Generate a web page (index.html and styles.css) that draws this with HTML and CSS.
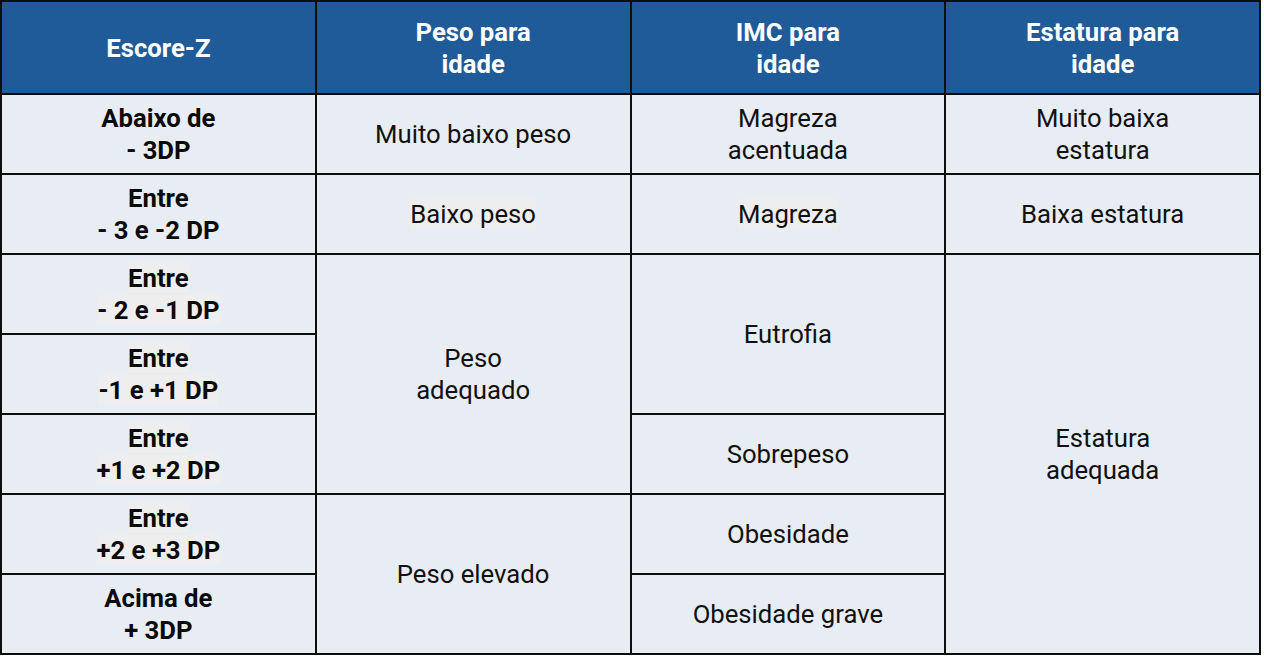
FILE: index.html
```html
<!DOCTYPE html>
<html lang="pt">
<head>
<meta charset="utf-8">
<title>Escore-Z</title>
<link rel="stylesheet" href="styles.css">
</head>
<body>
<table class="zt">
  <thead>
    <tr>
      <th>Escore-Z</th>
      <th>Peso para<br>idade</th>
      <th>IMC para<br>idade</th>
      <th>Estatura para<br>idade</th>
    </tr>
  </thead>
  <tbody>
    <tr>
      <td class="z">Abaixo de<br>- 3DP</td>
      <td>Muito baixo peso</td>
      <td>Magreza<br>acentuada</td>
      <td>Muito baixa<br>estatura</td>
    </tr>
    <tr>
      <td class="z">Entre<br>- 3 e -2 DP</td>
      <td><span class="hl">Baixo peso</span></td>
      <td><span class="hl">Magreza</span></td>
      <td>Baixa estatura</td>
    </tr>
    <tr>
      <td class="z"><span class="hl">Entre</span><br><span class="hl">- 2 e -1 DP</span></td>
      <td rowspan="3">Peso<br>adequado</td>
      <td rowspan="2">Eutrofia</td>
      <td rowspan="5">Estatura<br>adequada</td>
    </tr>
    <tr>
      <td class="z"><span class="hl">Entre</span><br><span class="hl">-1 e +1 DP</span></td>
    </tr>
    <tr>
      <td class="z"><span class="hl">Entre</span><br><span class="hl">+1 e +2 DP</span></td>
      <td>Sobrepeso</td>
    </tr>
    <tr>
      <td class="z"><span class="hl">Entre</span><br><span class="hl">+2 e +3 DP</span></td>
      <td rowspan="2">Peso elevado</td>
      <td>Obesidade</td>
    </tr>
    <tr>
      <td class="z">Acima de<br>+ 3DP</td>
      <td>Obesidade grave</td>
    </tr>
  </tbody>
</table>
</body>
</html>
```
FILE: styles.css
```css
html, body {
  margin: 0;
  padding: 0;
  background: #ffffff;
}
.zt {
  border-collapse: collapse;
  table-layout: fixed;
  width: 1261px;
  margin: 0;
  font-family: Roboto, "Liberation Sans", sans-serif;
  font-size: 25.7px;
  line-height: 32px;
  color: #111111;
}
.zt th,
.zt td {
  border: 2.5px solid #0d0d0d;
  text-align: center;
  vertical-align: middle;
  padding: 0;
}
.zt th {
  background: #1f5b99;
  color: #ffffff;
  font-weight: 700;
  height: 91px;
}
.zt td {
  background: #e8ecf3;
  height: 78px;
}
.zt td.z {
  font-weight: 700;
  color: #0a0a0a;
}
.hl {
  background: #eeeeee;
}
```
